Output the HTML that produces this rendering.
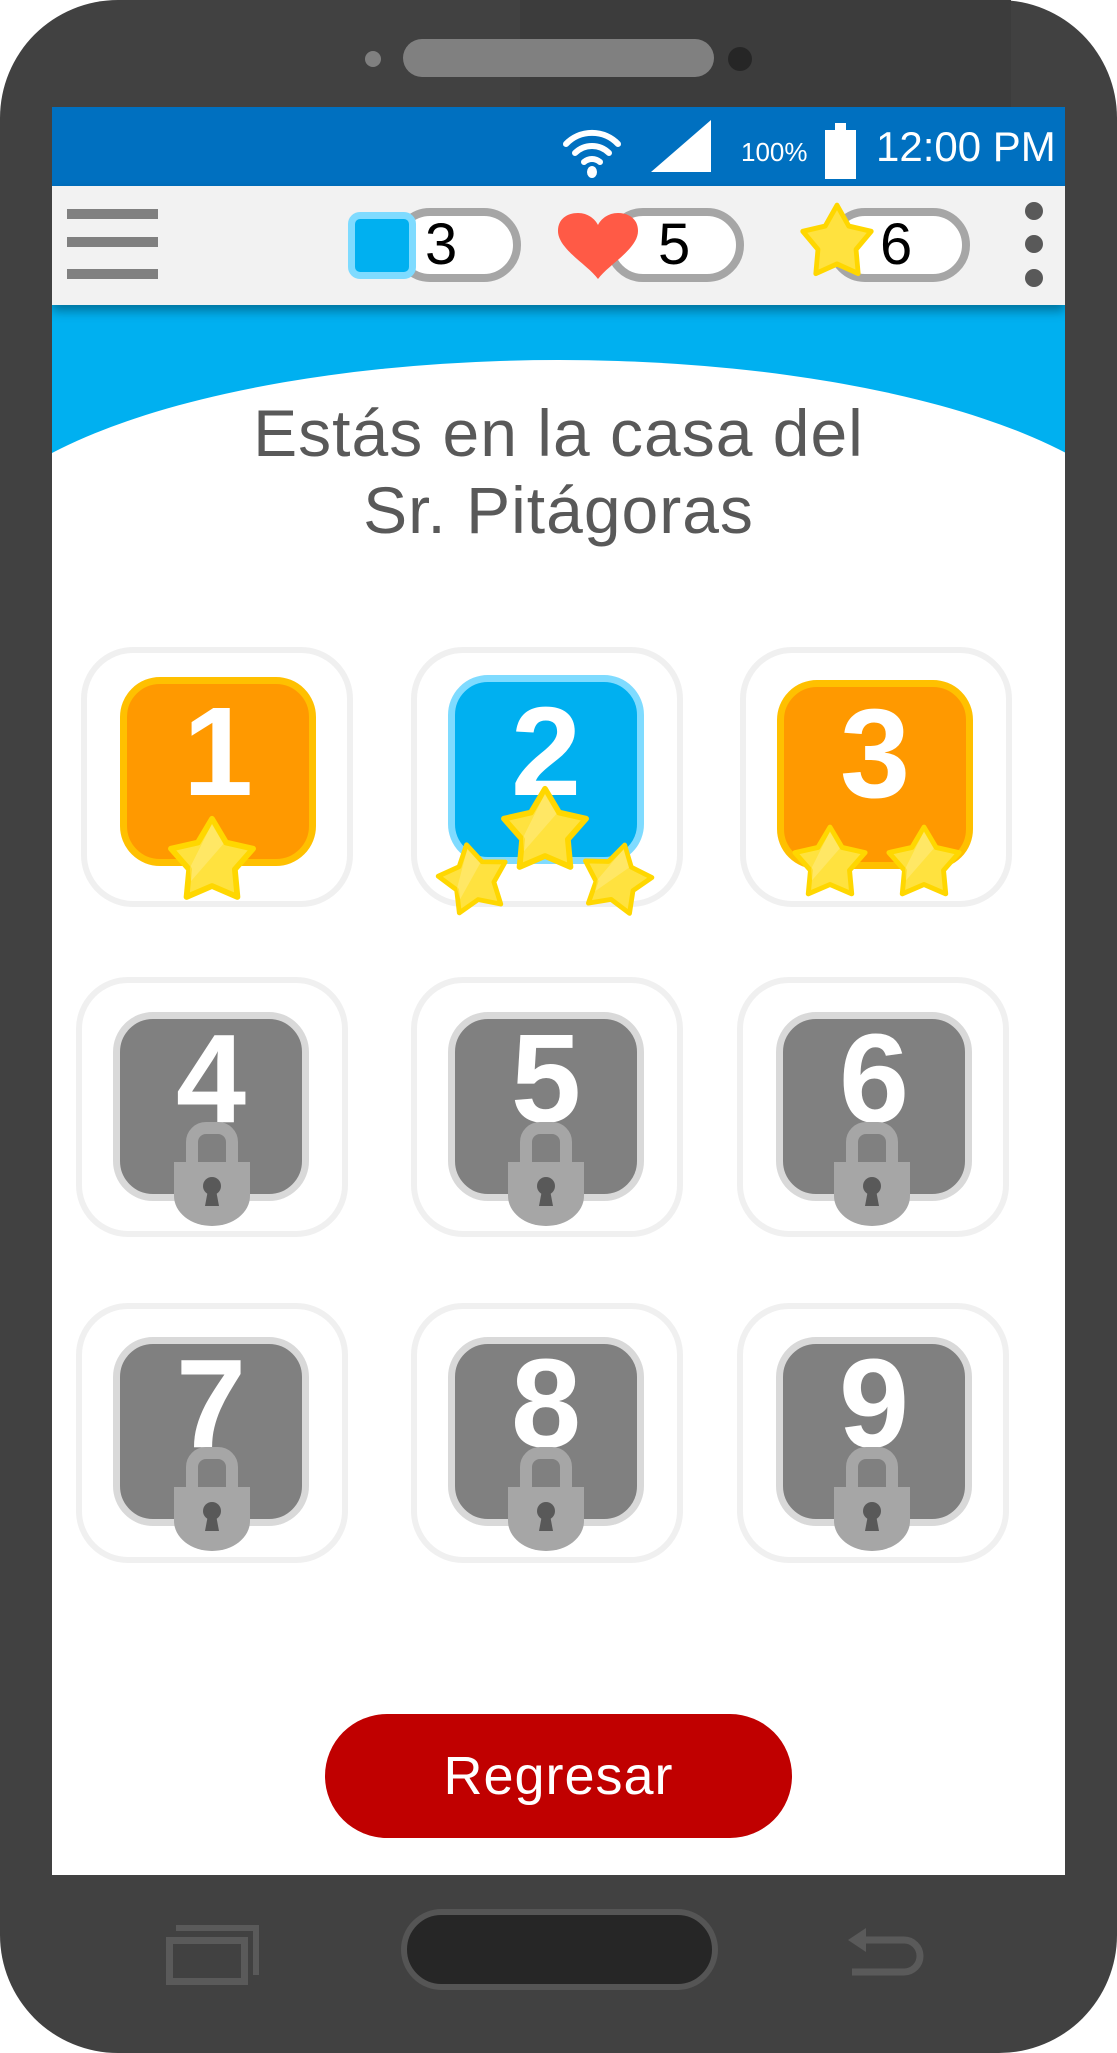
<!DOCTYPE html>
<html><head><meta charset="utf-8">
<style>
*{margin:0;padding:0;box-sizing:border-box}
body{width:1117px;height:2053px;background:#fff;position:relative;overflow:hidden;font-family:"Liberation Sans",sans-serif}
.abs{position:absolute}
.phone{left:0;top:0;width:1117px;height:2053px;background:#414141;border-radius:118px}
.screen{left:52px;top:107px;width:1013px;height:1768px;background:#fff;overflow:hidden}
.cell{position:absolute;width:272px;height:260px;border:6px solid #f0f0f0;border-radius:52px;background:#fff}
.tile{position:absolute;width:196px;height:189px;border-radius:40px;border:7px solid;color:#fff;font-weight:bold;font-size:126px;line-height:126px;text-align:center}
.or{background:#ff9900;border-color:#ffc000}
.bl{background:#00b0f0;border-color:#7fdbff}
.gr{background:#808080;border-color:#d9d9d9}
.pill{position:absolute;top:208px;height:74px;border:8px solid #a6a6a6;border-radius:37px;background:#fff;font-size:58px;line-height:58px;color:#000}
</style></head><body>
<div class="abs phone"></div>
<div class="abs" style="left:520px;top:0;width:491px;height:107px;background:#3c3c3c"></div>
<div class="abs" style="left:403px;top:39px;width:311px;height:38px;border-radius:19px;background:#808080"></div>
<div class="abs" style="left:365px;top:51px;width:16px;height:16px;border-radius:8px;background:#808080"></div>
<div class="abs" style="left:728px;top:47px;width:24px;height:24px;border-radius:12px;background:#262626"></div>

<div class="abs screen">
  <div class="abs" style="left:0;top:0;width:1013px;height:79px;background:#0070c0"></div>
  <svg class="abs" style="left:508px;top:15px" width="64" height="56" viewBox="0 0 64 56">
    <path d="M6 22 A36 36 0 0 1 58 22" stroke="#fff" stroke-width="6" fill="none" stroke-linecap="round"/>
    <path d="M15 31 A24 24 0 0 1 49 31" stroke="#fff" stroke-width="6" fill="none" stroke-linecap="round"/>
    <path d="M24 40 A12 12 0 0 1 40 40" stroke="#fff" stroke-width="6" fill="none" stroke-linecap="round"/>
    <ellipse cx="32" cy="50" rx="5" ry="6" fill="#fff"/>
  </svg>
  <svg class="abs" style="left:599px;top:13px" width="60" height="52"><polygon points="60,0 60,52 0,52" fill="#fff"/></svg>
  <div class="abs" style="left:689px;top:30px;color:#fff;font-size:26px">100%</div>
  <div class="abs" style="left:773px;top:23px;width:31px;height:49px;background:#fff"></div>
  <div class="abs" style="left:783px;top:16px;width:11px;height:8px;background:#fff"></div>
  <div class="abs" style="left:824px;top:16px;color:#fff;font-size:42px">12:00 PM</div>

  <div class="abs" style="left:0;top:79px;width:1013px;height:119px;background:#f2f2f2;box-shadow:0 6px 10px rgba(0,0,0,.35);z-index:2"></div>
  <div style="position:absolute;left:0;top:0;z-index:3">
    <div class="abs" style="left:15px;top:102px;width:91px;height:10px;background:#808080"></div>
    <div class="abs" style="left:15px;top:130px;width:91px;height:10px;background:#808080"></div>
    <div class="abs" style="left:15px;top:162px;width:91px;height:10px;background:#808080"></div>

    <div class="pill" style="left:341px;top:101px;width:128px;padding-left:24px">3</div>
    <div class="abs" style="left:296px;top:105px;width:68px;height:67px;border-radius:12px;background:#00b0f0;border:7px solid #7fdbff"></div>

    <div class="pill" style="left:554px;top:101px;width:138px;padding-left:44px">5</div>
    <svg class="abs" style="left:506px;top:106px" width="80" height="66" viewBox="0 0 80 66"><path d="M40 66 C30 52 0 36 0 18 C0 6 9 0 20 0 C30 0 37 6 40 12 C43 6 50 0 60 0 C71 0 80 6 80 18 C80 36 50 52 40 66Z" fill="#ff5a46"/></svg>

    <div class="pill" style="left:776px;top:101px;width:142px;padding-left:44px">6</div>
    <svg class="abs" style="left:745px;top:94px" width="80" height="84" viewBox="0 0 100 100" preserveAspectRatio="none"><polygon points="50,5 64.7,29.8 92.8,36.1 73.8,57.7 76.5,86.4 50,75 23.5,86.4 26.2,57.7 7.2,36.1 35.3,29.8" fill="#ffe23f" stroke="#ffd700" stroke-width="6" stroke-linejoin="round"/></svg>

    <div class="abs" style="left:973px;top:95px;width:18px;height:18px;border-radius:9px;background:#595959"></div>
    <div class="abs" style="left:973px;top:128px;width:18px;height:18px;border-radius:9px;background:#595959"></div>
    <div class="abs" style="left:973px;top:162px;width:18px;height:18px;border-radius:9px;background:#595959"></div>
  </div>

  <div class="abs" style="left:0;top:198px;width:1013px;height:200px;background:#00b0f0"></div>
  <div class="abs" style="left:-93px;top:253px;width:1200px;height:400px;border-radius:50%;background:#fff"></div>
  <div class="abs" style="left:2px;top:352px;width:1011px;height:400px;background:#fff"></div>
  <div class="abs" style="left:0;top:288px;width:1013px;text-align:center;color:#595959;font-size:66px;line-height:77px;letter-spacing:1px">Estás en la casa del<br>Sr. Pitágoras</div>
</div>

<div class="cell" style="left:81px;top:647px"></div>
<div class="cell" style="left:411px;top:647px"></div>
<div class="cell" style="left:740px;top:647px"></div>
<div class="cell" style="left:76px;top:977px"></div>
<div class="cell" style="left:411px;top:977px"></div>
<div class="cell" style="left:737px;top:977px"></div>
<div class="cell" style="left:76px;top:1303px"></div>
<div class="cell" style="left:411px;top:1303px"></div>
<div class="cell" style="left:737px;top:1303px"></div>

<div class="tile or" style="left:120px;top:677px;padding-top:5px">1</div>
<div class="tile bl" style="left:448px;top:675px;padding-top:7px">2</div>
<div class="tile or" style="left:777px;top:680px;padding-top:4px">3</div>

<div class="tile gr" style="left:113px;top:1012px;line-height:120px">4</div>
<div class="tile gr" style="left:448px;top:1012px;line-height:120px">5</div>
<div class="tile gr" style="left:776px;top:1012px;line-height:120px">6</div>
<div class="tile gr" style="left:113px;top:1337px;line-height:120px">7</div>
<div class="tile gr" style="left:448px;top:1337px;line-height:120px">8</div>
<div class="tile gr" style="left:776px;top:1337px;line-height:120px">9</div>

<svg width="0" height="0" style="position:absolute"><defs>
<g id="st"><polygon points="50,5 64.7,29.8 92.8,36.1 73.8,57.7 76.5,86.4 50,75 23.5,86.4 26.2,57.7 7.2,36.1 35.3,29.8" fill="#ffe23f" stroke="#ffd700" stroke-width="6" stroke-linejoin="round"/><polygon points="50,10 62,31 28,70 27,56" fill="#fff" opacity=".2"/></g>
<g id="lk"><path d="M18 44 V24 A14 14 0 0 1 32 10 H44 A14 14 0 0 1 58 24 V44" fill="none" stroke="#a6a6a6" stroke-width="12"/><path d="M0 44 H76 V78 A38 30 0 0 1 0 78Z" fill="#a6a6a6"/><circle cx="38" cy="68" r="9" fill="#595959"/><polygon points="34,72 42,72 45,88 31,88" fill="#595959"/></g>
</defs></svg>
<svg class="abs" style="left:164px;top:814px" width="96" height="96" viewBox="0 0 100 100"><use href="#st"/></svg>
<svg class="abs" style="left:497px;top:784px" width="96" height="96" viewBox="0 0 100 100"><use href="#st"/></svg>
<svg class="abs" style="left:434px;top:840px;transform:rotate(-12deg)" width="80" height="80" viewBox="0 0 100 100"><use href="#st"/></svg>
<svg class="abs" style="left:576px;top:840px;transform:rotate(14deg)" width="80" height="80" viewBox="0 0 100 100"><use href="#st"/></svg>
<svg class="abs" style="left:789px;top:823px" width="82" height="82" viewBox="0 0 100 100"><use href="#st"/></svg>
<svg class="abs" style="left:883px;top:823px" width="82" height="82" viewBox="0 0 100 100"><use href="#st"/></svg>

<svg class="abs" style="left:174px;top:1118px" width="76" height="116" viewBox="0 0 76 116"><use href="#lk"/></svg>
<svg class="abs" style="left:508px;top:1118px" width="76" height="116" viewBox="0 0 76 116"><use href="#lk"/></svg>
<svg class="abs" style="left:834px;top:1118px" width="76" height="116" viewBox="0 0 76 116"><use href="#lk"/></svg>
<svg class="abs" style="left:174px;top:1443px" width="76" height="116" viewBox="0 0 76 116"><use href="#lk"/></svg>
<svg class="abs" style="left:508px;top:1443px" width="76" height="116" viewBox="0 0 76 116"><use href="#lk"/></svg>
<svg class="abs" style="left:834px;top:1443px" width="76" height="116" viewBox="0 0 76 116"><use href="#lk"/></svg>

<div class="abs" style="left:325px;top:1714px;width:467px;height:124px;border-radius:62px;background:#c00000;color:#fff;font-size:54px;line-height:124px;text-align:center;letter-spacing:1px">Regresar</div>

<div class="abs" style="left:401px;top:1909px;width:317px;height:81px;border-radius:41px;background:#262626;border:6px solid #555"></div>
<div class="abs" style="left:176px;top:1925px;width:83px;height:50px;border:6px solid #5a5a5a;border-bottom:none;border-left:none"></div>
<div class="abs" style="left:166px;top:1937px;width:82px;height:48px;border:7px solid #5a5a5a"></div>
<svg class="abs" style="left:846px;top:1928px" width="80" height="56" viewBox="0 0 80 56"><path d="M8 12 H58 A16 16 0 0 1 58 44 H6" fill="none" stroke="#5a5a5a" stroke-width="7"/><polygon points="2,12 20,0 20,24" fill="#5a5a5a"/></svg>
</body></html>
